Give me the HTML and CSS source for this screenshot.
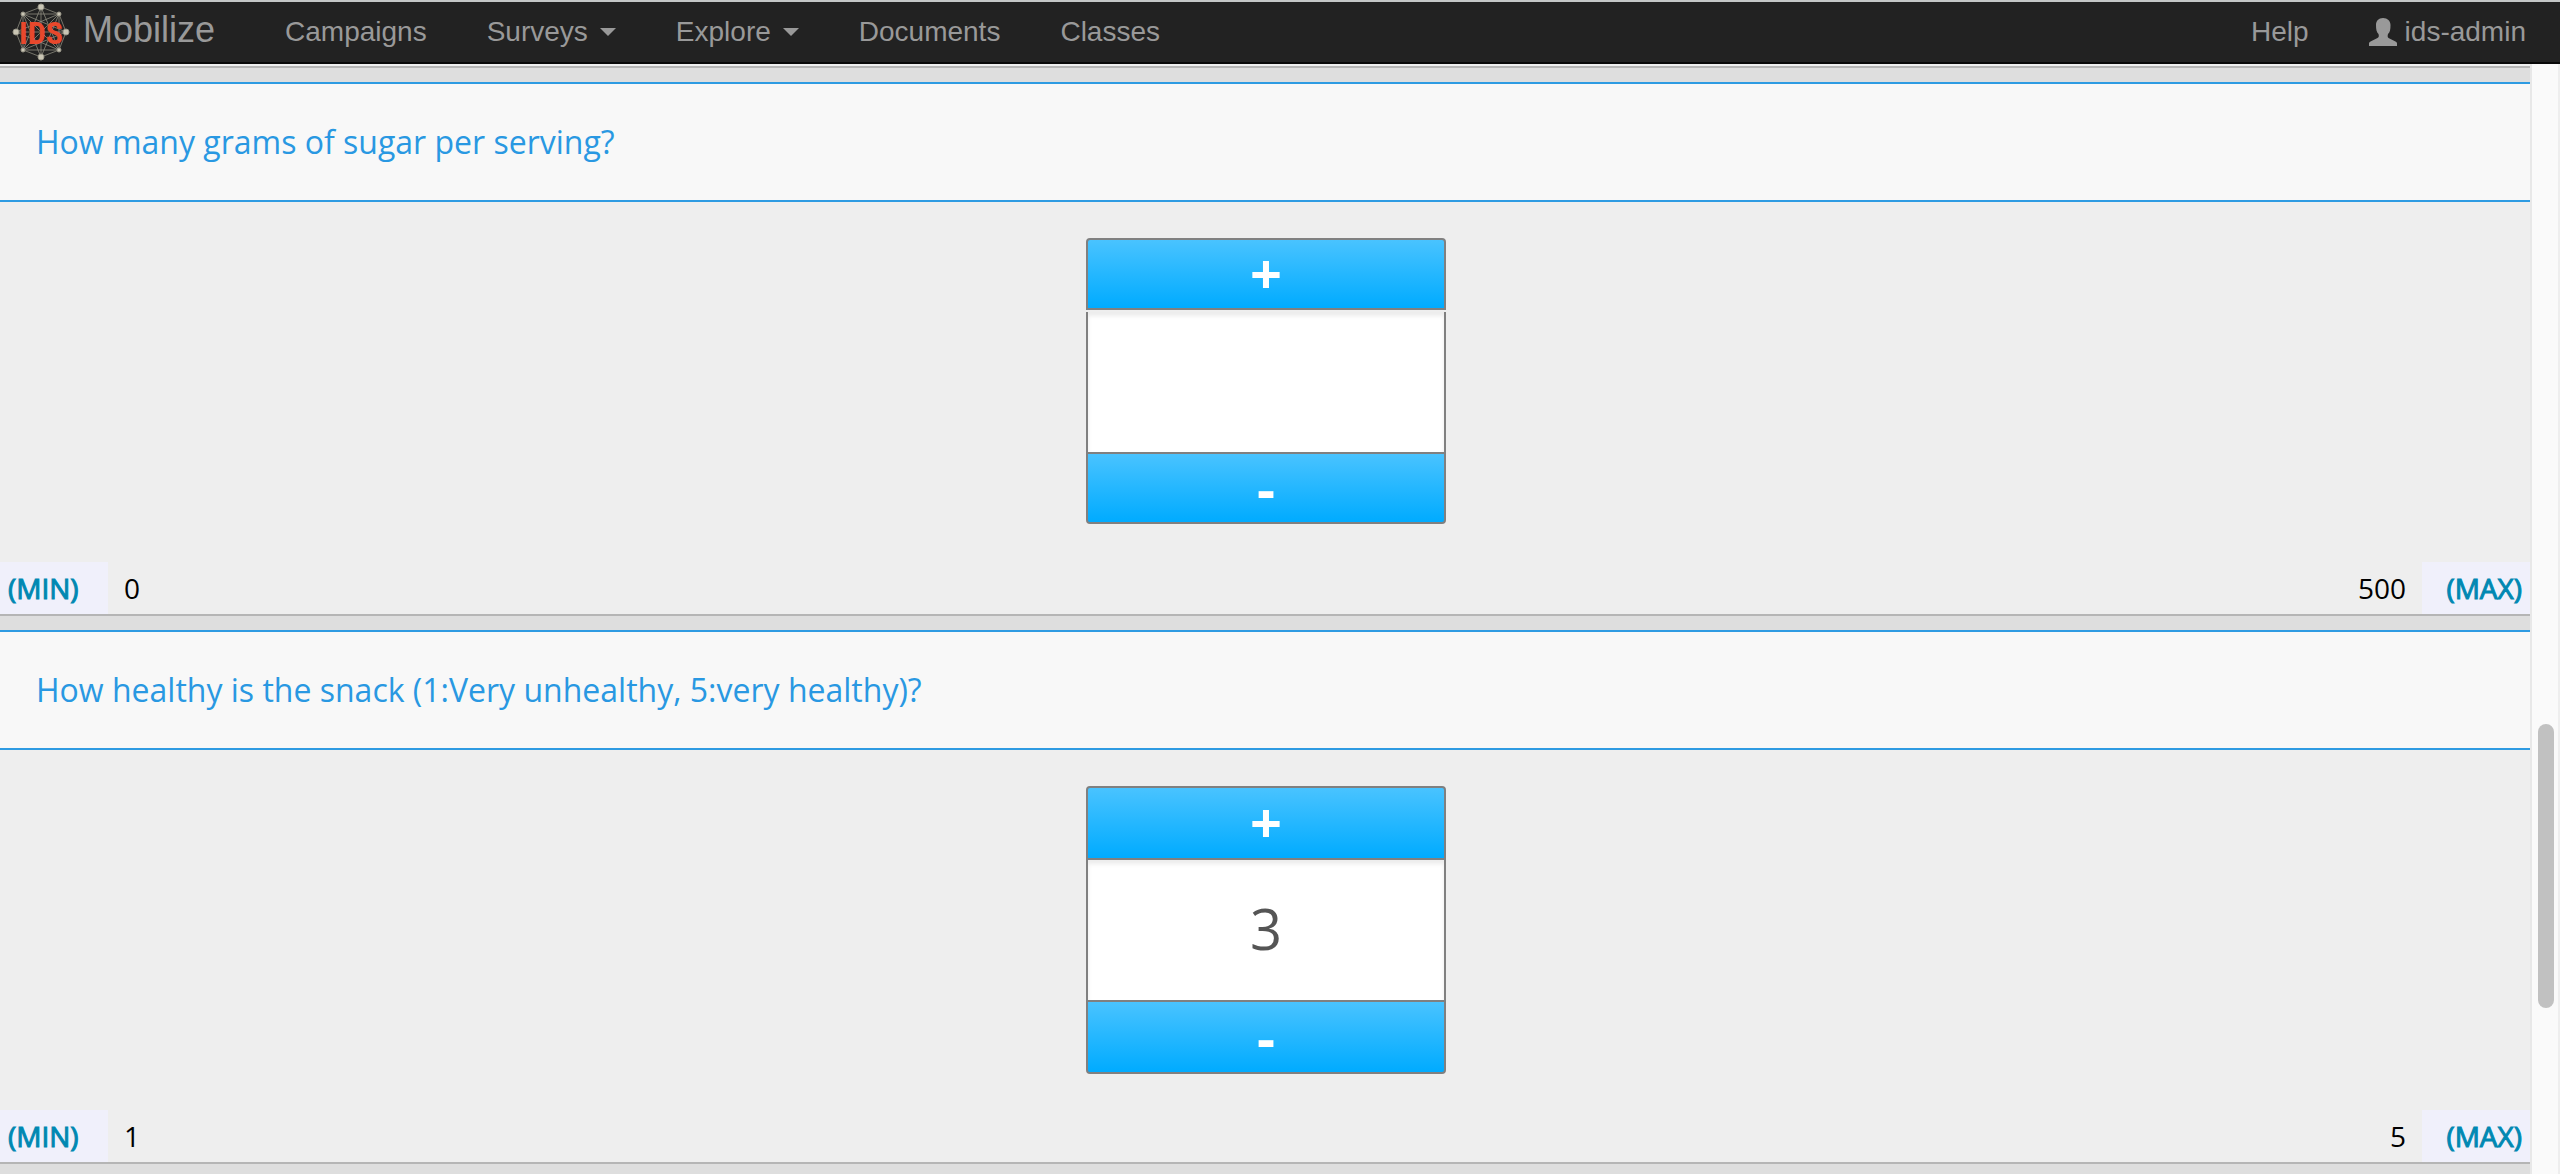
FILE: index.html
```html
<!DOCTYPE html>
<html lang="en">
<head>
<meta charset="utf-8">
<title>Mobilize</title>
<link rel="stylesheet" href="styles.css">
</head>
<body>
<header class="navbar">
  <a class="brand" href="#">
    <svg class="brand-logo" viewBox="0 0 60 60" aria-hidden="true">
      <g class="logo-web">
        <path d="M30 5 12 12 5 30 12 48 30 55 48 48 55 30 48 12Z"/>
        <path d="M30 5V55M5 30H55M12 12 48 48M48 12 12 48"/>
        <path d="M30 5 12 48M30 5 48 48M30 55 12 12M30 55 48 12M5 30 48 12M5 30 48 48M55 30 12 12M55 30 12 48"/>
        <path d="M12 12H48V48H12Z"/>
      </g>
      <g class="logo-nodes">
        <circle cx="30" cy="5" r="3"/><circle cx="5" cy="30" r="3"/>
        <circle cx="55" cy="30" r="3"/><circle cx="30" cy="55" r="3"/>
        <circle cx="12" cy="12" r="2"/><circle cx="48" cy="12" r="2"/>
        <circle cx="12" cy="48" r="2"/><circle cx="48" cy="48" r="2"/>
      </g>
      <text class="logo-text" x="30" y="42" text-anchor="middle">IDS</text>
    </svg>
    <span>Mobilize</span>
  </a>
  <nav class="nav">
    <a href="#">Campaigns</a>
    <a href="#">Surveys<span class="caret"></span></a>
    <a href="#">Explore<span class="caret"></span></a>
    <a href="#">Documents</a>
    <a href="#">Classes</a>
  </nav>
  <nav class="nav nav-right">
    <a href="#">Help</a>
    <a href="#"><svg class="user-icon" viewBox="0 0 28 28" aria-hidden="true"><path d="M14 0C9.500 0 7 3 7 7C7 11.500 7.500 14 9.500 16C10 18 10 19 8.500 20L1.500 23.500C.5 24.200 0 24.500 0 25.500V28H28V25.500C28 24.500 27.500 24.200 26.500 23.500L19.500 20C18.500 19 18.500 18 19 16C21 14 21.500 11.500 21.500 7C21.500 3 18.500 0 14 0Z"/></svg>ids-admin</a>
  </nav>
</header>
<div class="page">
  <main class="survey">
    <div class="range-tail"></div>
    <section class="prompt">
      <h2 class="prompt-title"><label for="sugar">How many grams of sugar per serving?</label></h2>
      <div class="prompt-body">
        <div class="stepper stepper-empty">
          <button type="button" class="step step-up">+</button>
          <input class="step-value" id="sugar" type="text" inputmode="numeric" value="">
          <button type="button" class="step step-down">-</button>
        </div>
        <div class="range">
          <span class="range-label">(MIN)</span><span>0</span>
          <span class="range-max">500</span><span class="range-label range-label-max">(MAX)</span>
        </div>
      </div>
    </section>
    <section class="prompt">
      <h2 class="prompt-title"><label for="healthy">How healthy is the snack (1:Very unhealthy, 5:very healthy)?</label></h2>
      <div class="prompt-body">
        <div class="stepper">
          <button type="button" class="step step-up">+</button>
          <input class="step-value" id="healthy" type="text" inputmode="numeric" value="3">
          <button type="button" class="step step-down">-</button>
        </div>
        <div class="range">
          <span class="range-label">(MIN)</span><span>1</span>
          <span class="range-max">5</span><span class="range-label range-label-max">(MAX)</span>
        </div>
      </div>
    </section>
  </main>
  <div class="scroll-track"><div class="scroll-thumb"></div></div>
</div>
</body>
</html>
```
FILE: styles.css
```css
* {
  box-sizing: border-box;
}

body {
  display: flex;
  flex-direction: column;
  min-height: 100vh;
  margin: 0;
  background: #dedede;
  color: #000;
  font-family: "Open Sans", "Noto Sans", sans-serif;
  font-size: 28px;
}

/* Navigation bar */
.navbar {
  display: flex;
  align-items: center;
  height: 64px;
  padding: 0 4px 0 11px;
  border-top: 2px solid #c4c7c7;
  border-bottom: 2px solid #080808;
  background: #222;
  font-family: "Liberation Sans", Arial, sans-serif;
}

.navbar a {
  color: #999;
  text-decoration: none;
}

.brand {
  display: flex;
  align-items: center;
  gap: 12px;
  margin-right: 40px;
  font-size: 36px;
  line-height: 56px;
}

.brand span {
  padding-bottom: 4px;
}

.brand-logo {
  width: 60px;
  height: 60px;
}

.logo-web {
  fill: none;
  stroke: #8d8b7f;
  stroke-width: 0.8;
}

.logo-nodes {
  fill: #c9c5b4;
  stroke: #9b988a;
  stroke-width: 1;
}

.logo-text {
  fill: #e8482c;
  font-family: "Liberation Sans Narrow", "Roboto Condensed", "Open Sans Condensed", "Liberation Sans", sans-serif;
  font-size: 32px;
  font-weight: 700;
}

.nav {
  display: flex;
}

.nav a {
  display: flex;
  align-items: center;
  padding: 0 30px;
  line-height: 60px;
}

.nav-right {
  margin-left: auto;
}

.caret {
  margin-left: 12px;
  border: 8px solid transparent;
  border-top-color: #999;
  border-bottom: 0;
}

.user-icon {
  width: 28px;
  height: 28px;
  margin-right: 8px;
  fill: #999;
}

/* Page area beside the scrollbar */
.page {
  display: flex;
  flex: 1;
}

.survey {
  flex: 1;
}

.range-tail {
  height: 4px;
  border-bottom: 2px solid #b5b5b5;
  background: #eee;
}

/* Survey prompts */
.prompt {
  margin-top: 14px;
  border-bottom: 2px solid #b5b5b5;
}

.prompt-title {
  margin: 0;
  padding: 0 36px;
  border: solid #2e9be2;
  border-width: 2px 0;
  background: #f8f8f8;
  color: #2998e2;
  font-size: 32px;
  font-weight: 400;
  line-height: 116px;
}

.prompt-body {
  display: flex;
  flex-direction: column;
  min-height: 412px;
  padding-top: 36px;
  background: #eee;
}

.stepper {
  display: grid;
  grid-template-rows: 74px 140px 74px;
  width: 362px;
  margin: 0 auto;
  padding-left: 2px;
}

.stepper-empty {
  grid-template-rows: 74px 140px 72px;
}

.stepper-empty .step-up {
  margin-bottom: 2px;
}

.step {
  padding: 0;
  border: 2px solid #808080;
  background: linear-gradient(#49c3ff, #00abff);
  color: #fff;
  font-family: inherit;
  font-size: 56px;
  font-weight: 700;
  line-height: 64px;
}

.step-up {
  padding-bottom: 4px;
  border-radius: 4px 4px 0 0;
}

.step-down {
  border-radius: 0 0 4px 4px;
}

.step-value {
  min-width: 0;
  padding: 0 0 4px;
  border: solid #808080;
  border-width: 0 2px;
  border-radius: 0;
  background: #fff;
  box-shadow: inset 0 4px 4px rgba(0, 0, 0, 0.08);
  color: #555;
  font-family: inherit;
  font-size: 56px;
  text-align: center;
}

/* Minimum and maximum under each stepper */
.range {
  display: flex;
  gap: 16px;
  margin-top: auto;
  line-height: 52px;
}

.range-label {
  width: 108px;
  padding: 0 8px;
  background: #f0f0fb;
  color: #0088b2;
  -webkit-text-stroke: 1px #0088b2;
}

.range-label-max {
  text-align: right;
}

.range-max {
  margin-left: auto;
}

/* Scrollbar */
.scroll-track {
  display: grid;
  grid-template-rows: 660fr 284fr 166fr;
  width: 30px;
  padding: 0 4px 0 6px;
  border-left: 2px solid #e8e8e8;
  border-right: 2px solid #eee;
  background: #fafafa;
}

.scroll-thumb {
  grid-row: 2;
  width: 16px;
  border-radius: 8px;
  background: #c1c1c1;
}
```
